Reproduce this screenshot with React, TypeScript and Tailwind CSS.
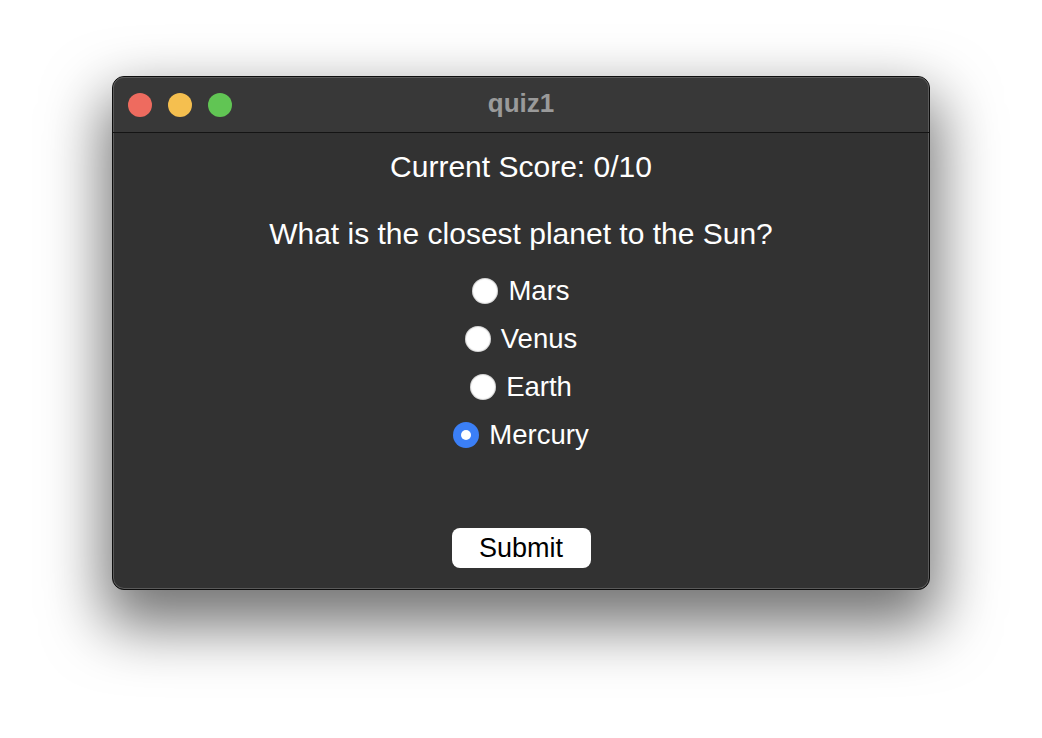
export default function App() {
  const options = ["Mars", "Venus", "Earth", "Mercury"];
  const selected = "Mercury";
  return (
    <div className="min-h-screen w-full bg-white flex justify-center pt-[76px] font-['Liberation_Sans',Arial,sans-serif]">
      <div className="w-[818px] h-[514px] rounded-[12px] bg-[#323232] border border-[#0e0e0e] shadow-[inset_0_0_0_1px_#5a5a5a,0_28px_60px_8px_rgba(0,0,0,0.55)] overflow-hidden flex flex-col">
        <div className="h-[56px] shrink-0 bg-[#383838] border-b border-[#141414] grid grid-cols-[1fr_auto_1fr] items-center px-[15px] rounded-t-[11px] shadow-[inset_0_1px_0_#5a5a5a,inset_1px_0_0_#5a5a5a,inset_-1px_0_0_#5a5a5a]">
          <div className="flex items-center gap-[16px]">
            <div className="w-[24px] h-[24px] rounded-full bg-[#ee6b5f]" />
            <div className="w-[24px] h-[24px] rounded-full bg-[#f5bf4f]" />
            <div className="w-[24px] h-[24px] rounded-full bg-[#61c554]" />
          </div>
          <div className="text-[26px] font-bold text-[#9a9a9a] leading-none pb-[3px]">quiz1</div>
          <div />
        </div>
        <div className="flex flex-col items-center pt-[16px]">
          <div className="text-[30px] leading-[36px] text-white">Current Score: 0/10</div>
          <div className="mt-[31px] text-[30px] leading-[36px] text-white">
            What is the closest planet to the Sun?
          </div>
          <div className="mt-[15px] flex flex-col items-center">
            {options.map((o) => (
              <div key={o} className="h-[48px] flex items-center gap-[10px]">
                {o === selected ? (
                  <div className="w-[26px] h-[26px] rounded-full bg-[#3b7ff6] flex items-center justify-center">
                    <div className="w-[10px] h-[10px] rounded-full bg-white" />
                  </div>
                ) : (
                  <div className="w-[26px] h-[26px] rounded-full bg-white shadow-[inset_0_0_1px_1px_rgba(0,0,0,0.18)]" />
                )}
                <span className="text-[27.5px] leading-none text-white">{o}</span>
              </div>
            ))}
          </div>
          <button className="mt-[69px] w-[139px] h-[40px] rounded-[8px] bg-white text-black text-[27px] leading-none flex items-center justify-center">
            Submit
          </button>
        </div>
      </div>
    </div>
  );
}
